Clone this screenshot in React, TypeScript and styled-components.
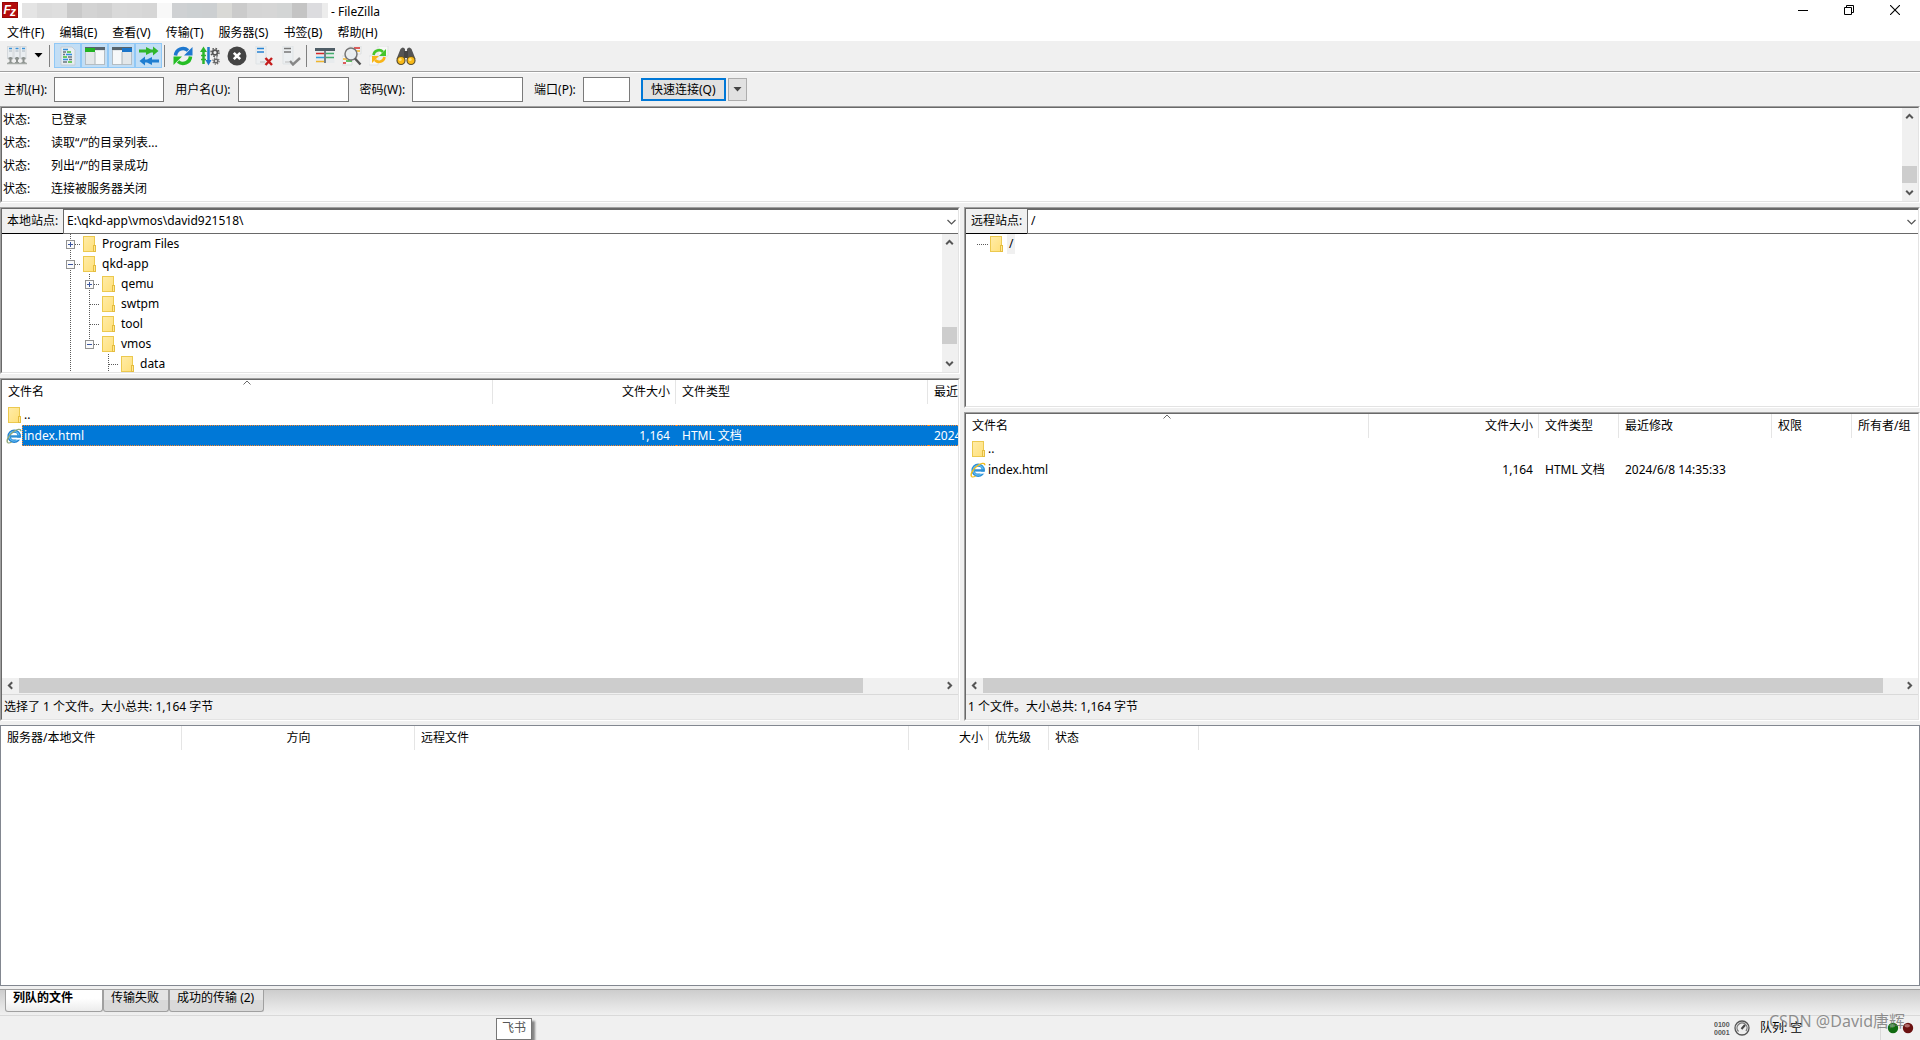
import React from 'react';
import styled, { createGlobalStyle, css } from 'styled-components';

const Global = createGlobalStyle`
  * { box-sizing: border-box; }
  html, body, #root { height: 100%; margin: 0; }
  body, button, input, select, table {
    font: 12px/16px "Noto Sans", "Noto Sans CJK SC", sans-serif;
    color: #000;
  }
  button, input, select { margin: 0; border-radius: 0; }
  button { padding: 0; border: 0; background: none; }
  svg { display: block; flex: none; }
`;

const Window = styled.div`
  display: flex;
  flex-direction: column;
  height: 100vh;
  overflow: hidden;
  background: #f0f0f0;
  white-space: nowrap;
`;

/* ---- title and menu ---- */

const TitleBar = styled.header`
  display: flex;
  align-items: center;
  flex: none;
  height: 20px;
  padding: 0 2px;
  background: #fff;
`;
const Redacted = styled.div`
  display: flex;
  width: 306px;
  height: 15px;
  margin: 0 3px 0 4px;
  overflow: hidden;
`;
const Block = styled.i<{ $tone: string }>`
  flex: none;
  width: 15px;
  background: ${(p) => p.$tone};
`;
const Title = styled.h1`
  flex: 1;
  margin: 0;
  padding-top: 3px;
  font-size: 12px;
  font-weight: 400;
  line-height: 16px;
`;
const WindowButton = styled.button`
  display: grid;
  place-items: center;
  width: 46px;
  height: 20px;
`;
const MenuBar = styled.nav`
  display: flex;
  flex: none;
  height: 21px;
  background: #fff;
`;
const MenuItem = styled.button`
  padding: 5px 8px 0 7px;
`;

/* ---- toolbar ---- */

const ToolBar = styled.div`
  display: flex;
  flex: none;
  align-items: flex-start;
  height: 32px;
  padding: 2px 3px;
  border-bottom: 1px solid #fff;
  box-shadow: inset 0 -1px #a0a0a0;
`;
const ToolButton = styled.button<{ $on?: boolean }>`
  display: grid;
  place-items: center;
  width: 27px;
  height: 25px;
  ${(p) =>
    p.$on &&
    css`
      background: #c2def5;
      border: 1px solid #90c8f6;
    `}
`;
const DropButton = styled(ToolButton)`
  width: 17px;
`;
const Divider = styled.i`
  width: 1px;
  height: 22px;
  margin: 2px 4px 0 2px;
  background: #808080;
`;

/* ---- quick connect ---- */

const QuickBar = styled.form`
  display: flex;
  flex: none;
  align-items: center;
  gap: 11px;
  height: 33px;
  padding: 0 4px;
`;
const Field = styled.label`
  display: flex;
  align-items: center;
  gap: 7px;
`;
const TextBox = styled.input<{ $width: number }>`
  width: ${(p) => p.$width}px;
  height: 25px;
  padding: 0 4px;
  border: 1px solid #7a7a7a;
  background: #fff;
`;
const ConnectGroup = styled.div`
  display: flex;
  gap: 2px;
`;
const ConnectButton = styled.button`
  height: 23px;
  width: 85px;
  border: 2px solid #0078d7;
  background: #e1e1e1;
`;
const HistoryButton = styled.button`
  display: grid;
  place-items: center;
  width: 19px;
  height: 23px;
  border: 1px solid #adadad;
  background: #e1e1e1;
`;

/* ---- sunken panels ---- */

const Sunken = styled.section<{ $grow?: number }>`
  display: flex;
  min-height: 0;
  min-width: 0;
  flex: ${(p) => (p.$grow ? `${p.$grow} 1 0` : 'none')};
  border: 1px solid;
  border-color: #a0a0a0 #fff #fff #a0a0a0;
`;
const SunkenBody = styled.div<{ $row?: boolean }>`
  display: flex;
  flex-direction: ${(p) => (p.$row ? 'row' : 'column')};
  flex: 1;
  min-width: 0;
  min-height: 0;
  overflow: hidden;
  border: 1px solid;
  border-color: #696969 #e3e3e3 #e3e3e3 #696969;
  background: #fff;
`;
const LogPanel = styled(Sunken)`
  height: 97px;
`;
const LogLines = styled.div`
  flex: 1;
  padding: 0 1px;
`;
const LogLine = styled.div`
  display: grid;
  grid-template-columns: 48px 1fr;
  line-height: 23px;
`;

/* ---- scrollbars ---- */

const Track = styled.div<{ $horizontal?: boolean }>`
  display: flex;
  flex: none;
  background: #f0f0f0;
  ${(p) =>
    p.$horizontal
      ? css`
          height: 16px;
          padding-bottom: 1px;
        `
      : css`
          flex-direction: column;
          width: 16px;
          padding-right: 1px;
        `}
`;
const TrackButton = styled.button`
  display: grid;
  place-items: center;
  flex: none;
  min-width: 15px;
  min-height: 15px;
  flex-basis: 17px;
`;
const Space = styled.i<{ $grow: number }>`
  flex: ${(p) => p.$grow} 1 0;
`;
const Thumb = styled(Space)`
  background: #cdcdcd;
`;

/* ---- local and remote halves ---- */

const Split = styled.main`
  display: grid;
  grid-template-columns: minmax(0, 960fr) minmax(0, 956fr);
  gap: 4px;
  flex: 513 1 0;
  min-height: 0;
  margin: 4px 0;
`;
const Side = styled.div`
  display: flex;
  flex-direction: column;
  gap: 4px;
  min-height: 0;
`;
const SiteBar = styled.div`
  display: flex;
  flex: none;
  height: 25px;
`;
const SiteLabel = styled.label`
  width: 61px;
  padding: 4px 0 0 5px;
  border-bottom: 1px solid #000;
  background: #f0f0f0;
`;
const Combo = styled.div`
  position: relative;
  flex: 1;
  display: flex;
  border: 1px solid #696969;
  border-right: 0;
  svg {
    position: absolute;
    right: 1px;
    top: 9px;
    pointer-events: none;
  }
`;
const ComboSelect = styled.select`
  flex: 1;
  appearance: none;
  padding: 0 20px 2px 3px;
  border: 0;
  background: #fff;
`;
const TreeArea = styled.div`
  display: flex;
  flex: 1;
  min-height: 0;
`;
const Tree = styled.ul<{ $indent: number }>`
  flex: 1;
  margin: 0;
  padding: 0 0 0 ${(p) => p.$indent}px;
  overflow: hidden;
  list-style: none;
`;
const TreeRow = styled.li`
  display: flex;
  align-items: center;
  height: 20px;
`;
const TreeLabel = styled.span<{ $shaded?: boolean }>`
  margin-left: 3px;
  padding: 2px;
  background: ${(p) => (p.$shaded ? '#f0f0f0' : 'transparent')};
`;

/* ---- file lists ---- */

const TableArea = styled.div`
  flex: 1;
  min-height: 0;
  overflow: hidden;
`;
const Table = styled.table`
  table-layout: fixed;
  width: 100%;
  border-collapse: separate;
  border-spacing: 0;
`;
const Head = styled.th<{ $align?: string; $last?: boolean }>`
  position: relative;
  height: 24px;
  padding: 0 5px 0 6px;
  border-right: ${(p) => (p.$last ? '0' : '1px solid #e5e5e5')};
  font-weight: 400;
  overflow: hidden;
  text-align: ${(p) => p.$align || 'left'};
`;
const SortMark = styled.svg`
  position: absolute;
  top: 0;
  left: calc(50% - 4px);
`;
const Cell = styled.td`
  height: 21px;
  padding: 0;
  overflow: hidden;
`;
const NameCell = styled.div`
  display: flex;
  align-items: center;
  padding-left: 4px;
`;
const CellText = styled.div<{ $selected?: boolean; $align?: string; $name?: boolean }>`
  flex: 1;
  height: 21px;
  padding: 0 6px;
  ${(p) => p.$name && 'padding: 0 2px;'}
  border: 0 dotted transparent;
  border-width: 1px 0;
  line-height: 19px;
  overflow: hidden;
  text-align: ${(p) => p.$align || 'left'};
  ${(p) =>
    p.$selected &&
    css`
      border-color: #ff8728;
      background: #0078d7;
      color: #fff;
    `}
  ${(p) => p.$selected && p.$name && 'border-left-width: 1px; padding-left: 1px;'}
`;
const PanelStatus = styled.div`
  flex: none;
  height: 25px;
  padding: 4px 2px;
  border-top: 1px solid #d9d9d9;
  background: #f0f0f0;
`;

/* ---- queue, tabs, status bar ---- */

const Queue = styled.section`
  flex: 259 1 0;
  min-height: 0;
  border: 1px solid #828790;
  background: #fff;
  overflow: hidden;
`;
const Tabs = styled.div`
  display: flex;
  flex: none;
  align-items: flex-start;
  height: 27px;
  margin-top: 3px;
  padding-left: 5px;
  border-top: 1px solid #a0a0a0;
  border-bottom: 1px solid #d9d9d9;
  background: linear-gradient(#cdcdcd, #f0f0f0);
`;
const Tab = styled.button<{ $active?: boolean }>`
  height: 22px;
  padding: 0 9px 5px 7px;
  border: 1px solid #a0a0a0;
  border-top: 0;
  border-radius: 0 0 3px 3px;
  background: linear-gradient(#e4e4e4 50%, #d9d9d9 50%);
  ${(p) =>
    p.$active &&
    css`
      padding-right: 29px;
      background: linear-gradient(#fff 40%, #ececec);
      font-weight: 700;
    `}
`;
const StatusBar = styled.footer`
  position: relative;
  display: flex;
  flex: none;
  align-items: center;
  justify-content: flex-end;
  gap: 3px;
  height: 24px;
  padding-right: 6px;
`;
const QueueState = styled.span`
  width: 128px;
  padding-left: 7px;
  border-right: 1px solid #d9d9d9;
  line-height: 24px;
`;
const Tooltip = styled.div`
  position: absolute;
  left: 496px;
  top: 2px;
  padding: 1px 5px 3px;
  border: 1px solid #767676;
  background: #fff;
  box-shadow: 3px 3px 2px rgba(0, 0, 0, 0.45);
  color: #575757;
`;
const Watermark = styled.div`
  position: absolute;
  right: 15px;
  top: -7px;
  color: rgba(110, 110, 110, 0.75);
  font-size: 16px;
  line-height: 24px;
`;

/* ---- icons ---- */

const Folder = () => (
  <svg width="16" height="16" viewBox="0 0 16 16">
    <defs>
      <linearGradient id="fold" x1="0" y1="0" x2="1" y2="1">
        <stop offset="0" stopColor="#ffeca8" />
        <stop offset="1" stopColor="#ffe07a" />
      </linearGradient>
    </defs>
    <rect x="2.5" y=".5" width="11" height="15" fill="url(#fold)" stroke="#ecc94f" />
    <rect x="12.5" y="9.5" width="2" height="6" fill="#ffe796" stroke="#e5bd3f" />
  </svg>
);

const Browser = ({ dim }: { dim?: boolean }) => (
  <svg width="16" height="16" viewBox="0 0 17 16">
    <circle cx="8.7" cy="8.2" r="5.4" fill="none" stroke={dim ? '#1f7fd0' : '#2d8fd5'} strokeWidth="3.6" />
    <circle cx="8.7" cy="8.2" r="5.2" fill="none" stroke="#62bdf2" strokeWidth="1.4" />
    <path d="M10.5 9.9H17v2h-6.5z" fill="#fff" />
    <path d="M5 7.2h10.2v2.5H5z" fill="#2d8fd5" />
    <path d="M2 15.2C-.4 13 3.2 6.8 8.2 3.2 11.6.8 15.8-.3 15.8 3" fill="none" stroke={dim ? '#8fa678' : '#f2bd1d'} strokeWidth="1.5" />
    <path d="M2 15.2c1 .6 2.6 0 4-.8" fill="none" stroke={dim ? '#8fa678' : '#f2bd1d'} strokeWidth="1.3" />
  </svg>
);

const Logo = () => (
  <svg width="16" height="16" viewBox="0 0 16 16">
    <rect width="16" height="16" fill="#b30c0c" />
    <rect x=".5" y=".5" width="15" height="15" fill="none" stroke="#7d0000" strokeDasharray="1 1" />
    <text x="1.5" y="12" fill="#fff" fontFamily="Liberation Sans, sans-serif" fontWeight="700" fontStyle="italic" fontSize="12">F</text>
    <text x="8" y="14" fill="#fff" fontFamily="Liberation Sans, sans-serif" fontWeight="700" fontStyle="italic" fontSize="12">z</text>
  </svg>
);

const Caret = ({ color = '#000' }: { color?: string }) => (
  <svg width="9" height="5" viewBox="0 0 9 5">
    <path d="M.5 0h8l-4 4.5z" fill={color} />
  </svg>
);

const turns = { up: 0, right: 90, down: 180, left: 270 };
const Arrow = ({ to }: { to: keyof typeof turns }) => (
  <svg width="9" height="9" viewBox="0 0 9 9">
    <path d="M1.2 6.2L4.5 2.9l3.3 3.3" fill="none" stroke="#555" strokeWidth="2" transform={`rotate(${turns[to]} 4.5 4.5)`} />
  </svg>
);

const Icon = ({ children }: { children: React.ReactNode }) => (
  <svg width="20" height="20" viewBox="0 0 20 20">{children}</svg>
);

const SiteManagerIcon = () => (
  <Icon>
    {[0, 6.5, 13].map((x) => (
      <g key={x}>
        <rect x={x + 0.5} y=".5" width="5.5" height="12" fill="#e9edf0" stroke="#d4d8db" />
        <path d={`M${x + 2} 2.5h3`} stroke="#3c93d8" strokeWidth="1.5" />
        <path d={`M${x + 2} 5h3`} stroke="#a8b4bd" />
        <path d={`M${x + 3.5} 11v6M${x + 1.5} 12.5h4M${x + 1.5} 17h4`} stroke="#8c918e" strokeWidth="2" />
      </g>
    ))}
    <path d="M0 17.5h20" stroke="#a5aaa6" strokeWidth="1.5" />
  </Icon>
);
const LogIcon = () => (
  <Icon>
    <path d="M3 1h11l3 3v15H3z" fill="#e8eef2" stroke="#c4cdd4" />
    <path d="M5 3.5h5M8 8.5h6M5 13.5h5" stroke="#338fdc" strokeWidth="1.5" />
    <path d="M9 6h4M5 11h4M10 16h4" stroke="#43ba35" strokeWidth="1.5" />
    <path d="M5 6h3M5 8.5h2M10 11h4M11 13.5h3M5 16h4" stroke="#68757e" strokeWidth="1.5" />
  </Icon>
);
const LocalTreeIcon = () => (
  <Icon>
    <rect x=".5" y="1.5" width="19" height="17" fill="#e3e7e9" stroke="#b4bdc3" />
    <rect x="10" y="5" width="9" height="13" fill="#f6f8f9" />
    <path d="M0 2.5h20" stroke="#57646c" strokeWidth="3" />
    <path d="M0 4h10" stroke="#22b323" strokeWidth="4" />
    <path d="M10 6v12" stroke="#aab4b8" />
  </Icon>
);
const RemoteTreeIcon = () => (
  <Icon>
    <rect x=".5" y="1.5" width="19" height="17" fill="#e3e7e9" stroke="#b4bdc3" />
    <rect x="1" y="5" width="9" height="13" fill="#f6f8f9" />
    <path d="M0 2.5h20" stroke="#57646c" strokeWidth="3" />
    <path d="M10 4h10" stroke="#1b75c9" strokeWidth="4" />
    <path d="M10 6v12" stroke="#aab4b8" />
  </Icon>
);
const QueueIcon = () => (
  <Icon>
    <path d="M0 3.5h7V1l5 2.5h2V.5l5.500 4.500L14 9.500v-3h-2L7 9V6.500H0z" fill="#30b62b" />
    <path d="M20 13.500h-7V11l-5 2.500H6v-3L.5 15 6 19.500v-3h2l5 2.500v-2.500h7z" fill="#1f7ed1" />
  </Icon>
);
const RefreshIcon = () => (
  <Icon>
    <path d="M2.5 9.5A7.5 7.5 0 0 1 15 4.5" fill="none" stroke="#1f78cf" strokeWidth="3.5" />
    <path d="M19.5 1v8.5H11z" fill="#1f78cf" />
    <path d="M17.5 10.5A7.5 7.5 0 0 1 5 15.5" fill="none" stroke="#25bd25" strokeWidth="3.5" />
    <path d="M.5 19v-8.5H9z" fill="#25bd25" />
  </Icon>
);
const ProcessIcon = () => (
  <Icon>
    <path d="M3.5 4v14" stroke="#2cb52c" strokeWidth="2.5" />
    <path d="M0 6L3.5.5 7 6z" fill="#2cb52c" />
    <path d="M1 9.5h5M1 13.5h5" stroke="#2cb52c" strokeWidth="1.5" />
    <path d="M8.5 1v14" stroke="#1f78cf" strokeWidth="2.5" />
    <path d="M5.5 14l3 5.5 3-5.5z" fill="#1f78cf" />
    <circle cx="15" cy="6.5" r="2.4" fill="none" stroke="#555" strokeWidth="1.7" />
    <circle cx="15" cy="6.5" r="4" fill="none" stroke="#555" strokeWidth="1.4" strokeDasharray="1.6 1.54" />
    <circle cx="16" cy="15" r="1.8" fill="none" stroke="#666" strokeWidth="1.5" />
    <circle cx="16" cy="15" r="3.1" fill="none" stroke="#666" strokeWidth="1.2" strokeDasharray="1.2 1.23" />
  </Icon>
);
const CancelIcon = () => (
  <Icon>
    <circle cx="10" cy="10" r="9.5" fill="#444" />
    <path d="M6.8 6.8l6.4 6.4M13.2 6.8l-6.4 6.4" stroke="#fff" strokeWidth="2.6" />
  </Icon>
);
const DisconnectIcon = () => (
  <Icon>
    <path d="M2 0h10v18H2z" fill="#eceff1" stroke="#dfe3e5" />
    <path d="M3 2.5h7M3 6h7" stroke="#2683d2" strokeWidth="1.5" />
    <path d="M6 16h5" stroke="#bbb" />
    <path d="M11.5 12l6.5 7M18 12l-6.5 7" stroke="#c41c1c" strokeWidth="2.4" />
  </Icon>
);
const ReconnectIcon = () => (
  <Icon>
    <path d="M2 0h10v18H2z" fill="#eceff1" stroke="#dfe3e5" />
    <path d="M3 2.5h7M3 6h7" stroke="#777" strokeWidth="1.5" />
    <path d="M4 16h4" stroke="#bbb" />
    <path d="M9 15l3 3.5L19 12" fill="none" stroke="#878787" strokeWidth="2.4" />
  </Icon>
);
const FilterIcon = () => (
  <Icon>
    <rect x=".5" y="2" width="19" height="15" fill="#e8ebed" />
    <path d="M0 3.5h20" stroke="#4f5d66" strokeWidth="3" />
    <path d="M1 7.5h8" stroke="#d52828" strokeWidth="1.5" />
    <path d="M1 11.5h8" stroke="#2f9edb" strokeWidth="1.5" />
    <path d="M1 15.5h8" stroke="#f0b52d" strokeWidth="1.5" />
    <path d="M11 7.5h8M11 11.5h8" stroke="#42ad6c" strokeWidth="1.5" />
    <path d="M10 3v14" stroke="#4f5d66" strokeWidth="1.5" />
  </Icon>
);
const SearchIcon = () => (
  <Icon>
    <path d="M8 0h11v8H8zM0 10h10v9H0z" fill="#f5f6f6" stroke="#dcdfe0" />
    <path d="M12 2h6" stroke="#d52828" strokeWidth="1.5" />
    <path d="M14 5h4" stroke="#f0b52d" strokeWidth="1.5" />
    <path d="M1 13h4" stroke="#f0b52d" strokeWidth="1.5" />
    <path d="M1 17h3" stroke="#d52828" strokeWidth="1.5" />
    <path d="M4 15h6" stroke="#35ae35" strokeWidth="1.5" />
    <circle cx="9" cy="8" r="6" fill="#e8edf0" fillOpacity=".8" stroke="#757575" strokeWidth="1.5" />
    <path d="M13 12.5l5.5 6" stroke="#555" strokeWidth="2.4" />
  </Icon>
);
const SyncIcon = () => (
  <Icon>
    <path d="M9 0h10v10H9zM0 10h9v9H0z" fill="#f8f8f8" stroke="#e0e2e3" />
    <path d="M4.5 9A5.5 5.5 0 0 1 14 6" fill="none" stroke="#45c52c" strokeWidth="2.6" />
    <path d="M17 3v7h-7z" fill="#45c52c" />
    <path d="M15.5 11A5.5 5.5 0 0 1 6 14" fill="none" stroke="#f8b518" strokeWidth="2.6" />
    <path d="M3 17v-7h7z" fill="#f8b518" />
  </Icon>
);
const BinocularsIcon = () => (
  <Icon>
    <path d="M4.5 3Q7 0 9 3v10H.5zM15.5 3Q13 0 11 3v10h8.5z" fill="#555" />
    <path d="M8 5h4v7H8z" fill="#444" />
    <circle cx="5" cy="14.5" r="4" fill="#f9b916" stroke="#5b5030" strokeWidth="1.2" />
    <circle cx="15" cy="14.5" r="4" fill="#f9b916" stroke="#5b5030" strokeWidth="1.2" />
    <circle cx="4.2" cy="13.5" r="1.5" fill="#ffe27a" />
    <circle cx="14.2" cy="13.5" r="1.5" fill="#ffe27a" />
  </Icon>
);

/* ---- data ---- */

const blocks =
  '#e4e4e4 #dcdcdc #dedede #c9c9c9 #d3d3d3 #d0d0d0 #d9d9d9 #d8d8d8 #d6d6d6 #f8f8f8 #cfd1d3 #ccd0d2 #cccfd1 #d9d9d6 #cbcbcb #d5d5d5 #d6d6d6 #d3d5d5 #c4c4c4 #dcdcdf #ececec'.split(' ');
const menus = ['文件(F)', '编辑(E)', '查看(V)', '传输(T)', '服务器(S)', '书签(B)', '帮助(H)'];
const logLines = ['已登录', '读取“/”的目录列表...', '列出“/”的目录成功', '连接被服务器关闭'];

const toggles: [string, React.FC][] = [
  ['消息日志', LogIcon],
  ['本地目录树', LocalTreeIcon],
  ['远程目录树', RemoteTreeIcon],
  ['传输队列', QueueIcon],
];
const actions: [string, React.FC][] = [
  ['刷新', RefreshIcon],
  ['处理队列', ProcessIcon],
  ['取消', CancelIcon],
  ['断开', DisconnectIcon],
  ['重新连接', ReconnectIcon],
];
const tools: [string, React.FC][] = [
  ['过滤器', FilterIcon],
  ['目录比较', SearchIcon],
  ['同步浏览', SyncIcon],
  ['查找文件', BinocularsIcon],
];

/* Each guide is one 19px step of the tree's dotted lines. */
type Guide = 'blank' | 'line' | 'plus' | 'minus' | 'minusEnd' | 'tee' | 'root';
const localTree: { name: string; guides: Guide[] }[] = [
  { name: 'Program Files', guides: ['plus'] },
  { name: 'qkd-app', guides: ['minus'] },
  { name: 'qemu', guides: ['line', 'plus'] },
  { name: 'swtpm', guides: ['line', 'tee'] },
  { name: 'tool', guides: ['line', 'tee'] },
  { name: 'vmos', guides: ['line', 'minusEnd'] },
  { name: 'data', guides: ['line', 'blank', 'tee'] },
];
const guideLines: Record<Guide, string> = {
  blank: '',
  line: 'M8.5 0v20',
  plus: 'M8.5 0v20M9 10.5h10',
  minus: 'M8.5 0v20M9 10.5h10',
  minusEnd: 'M8.5 0v10M9 10.5h10',
  tee: 'M8.5 0v20M9 10.5h10',
  root: 'M8 10.5h11',
};

const GuideMark = ({ kind }: { kind: Guide }) => {
  const open = kind === 'minus' || kind === 'minusEnd';
  return (
    <svg width="19" height="20" viewBox="0 0 19 20">
      <path d={guideLines[kind]} stroke="#5a5a5a" strokeDasharray="1 1" fill="none" />
      {(open || kind === 'plus') && (
        <>
          <rect x="4.5" y="6.5" width="8" height="8" fill="#fafafa" stroke="#919191" />
          <path d={open ? 'M6 10.5h5' : 'M6 10.5h5M8.5 8v5'} stroke="#3a559f" />
        </>
      )}
    </svg>
  );
};

const VScroll = ({ before, thumb, after }: { before: number; thumb: number; after: number }) => (
  <Track>
    <TrackButton aria-label="向上滚动"><Arrow to="up" /></TrackButton>
    <Space $grow={before} />
    <Thumb $grow={thumb} />
    <Space $grow={after} />
    <TrackButton aria-label="向下滚动"><Arrow to="down" /></TrackButton>
  </Track>
);
const HScroll = ({ thumb, after }: { thumb: number; after: number }) => (
  <Track $horizontal>
    <TrackButton aria-label="向左滚动"><Arrow to="left" /></TrackButton>
    <Thumb $grow={thumb} />
    <Space $grow={after} />
    <TrackButton aria-label="向右滚动"><Arrow to="right" /></TrackButton>
  </Track>
);

const SitePicker = ({ id, label, path }: { id: string; label: string; path: string }) => (
  <SiteBar>
    <SiteLabel htmlFor={id}>{label}</SiteLabel>
    <Combo>
      <ComboSelect id={id}><option>{path}</option></ComboSelect>
      <svg width="11" height="7" viewBox="0 0 11 7">
        <path d="M1.5 1l4 4 4-4" fill="none" stroke="#555" strokeWidth="1.2" />
      </svg>
    </Combo>
  </SiteBar>
);

type Column = { title: string; width?: number; align?: string; sorted?: boolean };
const Columns = ({ columns }: { columns: Column[] }) => (
  <>
    <colgroup>
      {columns.map((c, i) => <col key={i} style={c.width ? { width: c.width } : undefined} />)}
    </colgroup>
    <thead>
      <tr>
        {columns.map((c, i) => (
          <Head key={i} $align={c.align} $last={i === columns.length - 1}>
            {c.title}
            {c.sorted && (
              <SortMark width="8" height="5" viewBox="0 0 8 5">
                <path d="M.5 4.5L4 1l3.5 3.5" fill="none" stroke="#696969" />
              </SortMark>
            )}
          </Head>
        ))}
      </tr>
    </thead>
  </>
);

const FileTable = ({ columns, values, selected }: { columns: Column[]; values: string[]; selected?: boolean }) => (
  <TableArea>
    <Table>
      <Columns columns={columns} />
      <tbody>
        <tr>
          <Cell colSpan={columns.length}>
            <NameCell><Folder /><CellText $name>..</CellText></NameCell>
          </Cell>
        </tr>
        <tr>
          <Cell>
            <NameCell><Browser dim={selected} /><CellText $name $selected={selected}>index.html</CellText></NameCell>
          </Cell>
          {values.map((v, i) => (
            <Cell key={i}>
              <CellText $selected={selected} $align={columns[i + 1].align}>{v}</CellText>
            </Cell>
          ))}
        </tr>
      </tbody>
    </Table>
  </TableArea>
);

const localColumns: Column[] = [
  { title: '文件名', width: 491, sorted: true },
  { title: '文件大小', width: 183, align: 'right' },
  { title: '文件类型', width: 252 },
  { title: '最近修改' },
];
const remoteColumns: Column[] = [
  { title: '文件名', sorted: true },
  { title: '文件大小', width: 170, align: 'right' },
  { title: '文件类型', width: 80 },
  { title: '最近修改', width: 153 },
  { title: '权限', width: 80 },
  { title: '所有者/组', width: 66 },
];
const queueColumns: Column[] = [
  { title: '服务器/本地文件', width: 181 },
  { title: '方向', width: 233, align: 'center' },
  { title: '远程文件', width: 494 },
  { title: '大小', width: 80, align: 'right' },
  { title: '优先级', width: 60 },
  { title: '状态', width: 150 },
  { title: '' },
];

const ToolGroup = ({ items, on }: { items: [string, React.FC][]; on?: boolean }) => (
  <>
    {items.map(([label, Glyph]) => (
      <ToolButton key={label} type="button" aria-label={label} $on={on}><Glyph /></ToolButton>
    ))}
  </>
);

const Led = ({ color, glow }: { color: string; glow: string }) => (
  <svg width="12" height="12" viewBox="0 0 12 12">
    <circle cx="6" cy="6" r="5.2" fill={color} />
    <ellipse cx="5.2" cy="3.8" rx="2.8" ry="1.8" fill={glow} />
  </svg>
);

export default function App() {
  return (
    <Window>
      <Global />
      <TitleBar>
        <Logo />
        <Redacted>{blocks.map((tone, i) => <Block key={i} $tone={tone} />)}</Redacted>
        <Title>- FileZilla</Title>
        <WindowButton aria-label="最小化">
          <svg width="10" height="10" viewBox="0 0 10 10"><path d="M0 5.5h10" stroke="#000" /></svg>
        </WindowButton>
        <WindowButton aria-label="还原">
          <svg width="10" height="10" viewBox="0 0 10 10">
            <path d="M.5 2.5h7v7h-7zM2.5 2V.5h7v7H8" fill="none" stroke="#000" />
          </svg>
        </WindowButton>
        <WindowButton aria-label="关闭">
          <svg width="10" height="10" viewBox="0 0 10 10"><path d="M0 0l10 10M10 0L0 10" stroke="#000" strokeWidth="1.1" /></svg>
        </WindowButton>
      </TitleBar>
      <MenuBar>{menus.map((m) => <MenuItem key={m}>{m}</MenuItem>)}</MenuBar>
      <ToolBar>
        <ToolButton aria-label="站点管理器"><SiteManagerIcon /></ToolButton>
        <DropButton aria-label="站点列表"><Caret /></DropButton>
        <Divider />
        <ToolGroup items={toggles} on />
        <Divider />
        <ToolGroup items={actions} />
        <Divider />
        <ToolGroup items={tools} />
      </ToolBar>
      <QuickBar onSubmit={(e) => e.preventDefault()}>
        <Field>主机(H):<TextBox $width={110} /></Field>
        <Field>用户名(U):<TextBox $width={111} /></Field>
        <Field>密码(W):<TextBox $width={111} type="password" /></Field>
        <Field>端口(P):<TextBox $width={47} /></Field>
        <ConnectGroup>
          <ConnectButton>快速连接(Q)</ConnectButton>
          <HistoryButton type="button" aria-label="历史记录"><Caret color="#444" /></HistoryButton>
        </ConnectGroup>
      </QuickBar>

      <LogPanel>
        <SunkenBody $row>
          <LogLines>
            {logLines.map((line) => <LogLine key={line}><span>状态:</span><span>{line}</span></LogLine>)}
          </LogLines>
          <VScroll before={42} thumb={17} after={1} />
        </SunkenBody>
      </LogPanel>

      <Split>
        <Side>
          <Sunken $grow={165}>
            <SunkenBody>
              <SitePicker id="local-site" label="本地站点:" path="E:\qkd-app\vmos\david921518\" />
              <TreeArea>
                <Tree $indent={60}>
                  {localTree.map((node) => (
                    <TreeRow key={node.name}>
                      {node.guides.map((g, i) => <GuideMark key={i} kind={g} />)}
                      <Folder />
                      <TreeLabel>{node.name}</TreeLabel>
                    </TreeRow>
                  ))}
                </Tree>
                <VScroll before={76} thumb={17} after={11} />
              </TreeArea>
            </SunkenBody>
          </Sunken>
          <Sunken $grow={340}>
            <SunkenBody>
              <FileTable columns={localColumns} selected values={['1,164', 'HTML 文档', '2024/6/8 14:35:33']} />
              <HScroll thumb={843} after={78} />
              <PanelStatus>选择了 1 个文件。大小总共: 1,164 字节</PanelStatus>
            </SunkenBody>
          </Sunken>
        </Side>
        <Side>
          <Sunken $grow={199}>
            <SunkenBody>
              <SitePicker id="remote-site" label="远程站点:" path="/" />
              <TreeArea>
                <Tree $indent={3}>
                  <TreeRow>
                    <GuideMark kind="root" />
                    <Folder />
                    <TreeLabel $shaded>/</TreeLabel>
                  </TreeRow>
                </Tree>
              </TreeArea>
            </SunkenBody>
          </Sunken>
          <Sunken $grow={306}>
            <SunkenBody>
              <FileTable columns={remoteColumns} values={['1,164', 'HTML 文档', '2024/6/8 14:35:33', '', '']} />
              <HScroll thumb={900} after={18} />
              <PanelStatus>1 个文件。大小总共: 1,164 字节</PanelStatus>
            </SunkenBody>
          </Sunken>
        </Side>
      </Split>

      <Queue>
        <Table><Columns columns={queueColumns} /></Table>
      </Queue>
      <Tabs>
        <Tab $active>列队的文件</Tab>
        <Tab>传输失败</Tab>
        <Tab>成功的传输 (2)</Tab>
      </Tabs>
      <StatusBar>
        <svg width="17" height="16" viewBox="0 0 17 16" fill="#555" fontFamily="Liberation Sans, sans-serif" fontWeight="700" fontSize="7">
          <text x="0" y="7">0100</text>
          <text x="0" y="15">0001</text>
        </svg>
        <svg width="16" height="16" viewBox="0 0 16 16">
          <circle cx="8" cy="8" r="7" fill="#eee" stroke="#555" strokeWidth="1.3" />
          <path d="M4.5 11.5A5 5 0 1 1 12 11" fill="none" stroke="#777" strokeWidth="1.3" />
          <path d="M7.5 9L11 5" stroke="#444" strokeWidth="2" />
        </svg>
        <QueueState>队列: 空</QueueState>
        <Space $grow={0} />
        <Led color="#116b11" glow="#5fae5f" />
        <Led color="#6b1111" glow="#b06a6a" />
        <Tooltip role="tooltip">飞书</Tooltip>
        <Watermark>CSDN @David唐辉</Watermark>
      </StatusBar>
    </Window>
  );
}
